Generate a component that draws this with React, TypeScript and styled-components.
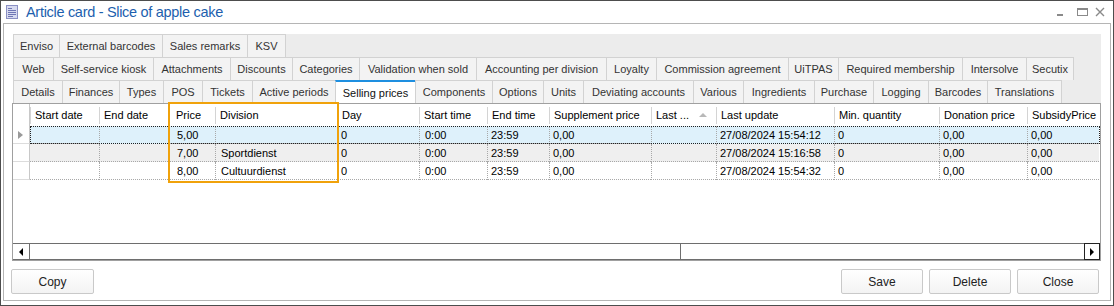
import React from "react";
import styled, { createGlobalStyle } from "styled-components";

const GlobalStyle = createGlobalStyle`
  html, body { margin: 0; padding: 0; background: #fff; }
  body { font-family: "Liberation Sans", Arial, sans-serif; }
  * { box-sizing: border-box; }
`;

const COLS = "17px 69px 69px 47px 122px 82px 68px 62px 102px 65px 118px 105px 88px 72px";

const Window = styled.div`
  position: relative;
  width: 1114px;
  height: 306px;
  border: 1px solid #4d4d4d;
  background: #fff;
  display: flex;
  flex-direction: column;
`;

const TitleBar = styled.div`
  height: 22px;
  display: flex;
  align-items: center;
  padding: 0 6px 0 5px;
`;

const Title = styled.span`
  margin-left: 8px;
  font-size: 14.5px;
  color: #1d5fae;
  letter-spacing: -0.3px;
`;

const Controls = styled.div`
  margin-left: auto;
  display: flex;
  align-items: center;
  height: 100%;
`;

const Control = styled.div<{ $w: number }>`
  width: ${({ $w }) => $w}px;
  display: flex;
  justify-content: center;
  align-items: center;
`;

const Frame = styled.div`
  flex: 1;
  margin: 0 2px 4px;
  border: 1px solid #b5b5b5;
  display: flex;
  flex-direction: column;
  padding: 10px 9px 6px 8px;
`;

const TabStrip = styled.div`
  margin-left: 1px;
  height: 69px;
  background: #ececec;
  display: flex;
  flex-direction: column;
`;

const TabRow = styled.div`
  display: flex;
  height: 23px;
`;

const Tab = styled.div<{ $w: number; $active?: boolean }>`
  width: ${({ $w }) => $w}px;
  height: 23px;
  border-top: ${({ $active }) => ($active ? "2px solid #1e8fe0" : "1px solid #d2d2d2")};
  border-left: 1px solid #d2d2d2;
  background: ${({ $active }) => ($active ? "#fff" : "#f3f3f3")};
  color: ${({ $active }) => ($active ? "#111" : "#333")};
  font-size: 11px;
  display: flex;
  align-items: center;
  justify-content: center;
  white-space: nowrap;
  &:last-child {
    border-right: 1px solid #d2d2d2;
  }
`;

const Grid = styled.div`
  position: relative;
  height: 158px;
  border: 1px solid #a0a0a0;
  display: flex;
  flex-direction: column;
  font-size: 11px;
  color: #000;
`;

const HeaderRow = styled.div`
  display: grid;
  grid-template-columns: ${COLS};
  height: 22px;
`;

const HeadCell = styled.div<{ $pad?: number }>`
  position: relative;
  display: flex;
  align-items: center;
  padding-left: ${({ $pad }) => $pad ?? 5}px;
  white-space: nowrap;
  overflow: hidden;
  &::before {
    content: "";
    position: absolute;
    left: 0;
    top: 3px;
    bottom: 2px;
    border-left: 1px solid #d4d4d4;
  }
`;

const HeadCorner = styled.div`
  border-right: 1px solid #c8c8c8;
`;

const SortArrow = styled.span`
  margin-left: auto;
  margin-right: 9px;
  width: 0;
  height: 0;
  border-left: 4px solid transparent;
  border-right: 4px solid transparent;
  border-bottom: 4px solid #b8b8b8;
`;

const BodyRow = styled.div<{ $bg: string; $focus?: boolean }>`
  position: relative;
  display: grid;
  grid-template-columns: ${COLS};
  height: 18px;
  & > div:not(:first-child) {
    background: ${({ $bg }) => $bg};
  }
  ${({ $focus }) =>
    $focus &&
    `
    &::after {
      content: "";
      position: absolute;
      left: 17px;
      right: 0;
      top: 0;
      bottom: 0;
      border: 1px dotted #222;
      pointer-events: none;
    }
  `}
`;

const Indicator = styled.div`
  border-right: 1px solid #c8c8c8;
  border-bottom: 1px solid #dcdcdc;
  display: flex;
  align-items: center;
  padding-left: 5px;
`;

const Pointer = styled.span`
  width: 0;
  height: 0;
  border-top: 4px solid transparent;
  border-bottom: 4px solid transparent;
  border-left: 5px solid #9a9a9a;
`;

const Cell = styled.div<{ $pad?: number }>`
  display: flex;
  align-items: center;
  padding-left: ${({ $pad }) => $pad ?? 5}px;
  border-left: 1px dotted #a8a8a8;
  border-bottom: 1px dotted #a8a8a8;
  white-space: nowrap;
  overflow: hidden;
  &:nth-child(2) {
    border-left: none;
  }
`;

const Filler = styled.div`
  flex: 1;
`;

const ScrollBar = styled.div`
  height: 17px;
  display: flex;
  border-top: 1px solid #6e6e6e;
  border-bottom: 1px solid #6e6e6e;
`;

const ScrollButton = styled.div<{ $side: "left" | "right" }>`
  width: 17px;
  display: flex;
  align-items: center;
  justify-content: center;
  ${({ $side }) =>
    $side === "left"
      ? "border-right: 1px solid #6e6e6e;"
      : "border: 1px solid #222; margin-top: -1px; margin-bottom: -1px; width: 16px;"}
`;

const Arrow = styled.span<{ $dir: "left" | "right" }>`
  width: 0;
  height: 0;
  border-top: 4px solid transparent;
  border-bottom: 4px solid transparent;
  ${({ $dir }) =>
    $dir === "left" ? "border-right: 4px solid #000;" : "border-left: 4px solid #000;"}
`;

const Thumb = styled.div`
  width: 651px;
  border-right: 1px solid #6e6e6e;
`;

const Track = styled.div`
  flex: 1;
`;

const Highlight = styled.div`
  position: absolute;
  left: 155px;
  top: -2px;
  width: 171px;
  height: 81px;
  border: 2px solid #f0a20b;
  pointer-events: none;
`;

const ButtonRow = styled.div`
  margin-top: 8px;
  height: 25px;
  display: flex;
  gap: 6px;
  padding-right: 2px;
`;

const Button = styled.button<{ $push?: boolean }>`
  width: 82px;
  height: 25px;
  border: 1px solid #c9c9c9;
  border-radius: 2px;
  background: linear-gradient(#ffffff, #f3f3f3);
  font-family: "Liberation Sans", Arial, sans-serif;
  font-size: 12px;
  color: #222;
  padding: 0;
  ${({ $push }) => $push && "margin-left: auto;"}
  &:first-child {
    margin-left: -1px;
    width: 83px;
  }
`;

const tabRows: [string, number][][] = [
  [
    ["Enviso", 46],
    ["External barcodes", 103],
    ["Sales remarks", 85],
    ["KSV", 39],
  ],
  [
    ["Web", 40],
    ["Self-service kiosk", 100],
    ["Attachments", 77],
    ["Discounts", 62],
    ["Categories", 67],
    ["Validation when sold", 117],
    ["Accounting per division", 130],
    ["Loyalty", 50],
    ["Commission agreement", 132],
    ["UiTPAS", 50],
    ["Required membership", 124],
    ["Intersolve", 64],
    ["Secutix", 48],
  ],
  [
    ["Details", 49],
    ["Finances", 57],
    ["Types", 44],
    ["POS", 39],
    ["Tickets", 50],
    ["Active periods", 83],
    ["Selling prices", 80],
    ["Components", 77],
    ["Options", 51],
    ["Units", 40],
    ["Deviating accounts", 110],
    ["Various", 50],
    ["Ingredients", 71],
    ["Purchase", 59],
    ["Logging", 55],
    ["Barcodes", 59],
    ["Translations", 75],
  ],
];

const headers = [
  "Start date",
  "End date",
  "Price",
  "Division",
  "Day",
  "Start time",
  "End time",
  "Supplement price",
  "Last ...",
  "Last update",
  "Min. quantity",
  "Donation price",
  "SubsidyPrice",
];

const rows = [
  { bg: "#def1fb", price: "5,00", division: "", updated: "27/08/2024 15:54:12" },
  { bg: "#efefef", price: "7,00", division: "Sportdienst", updated: "27/08/2024 15:16:58" },
  { bg: "#ffffff", price: "8,00", division: "Cultuurdienst", updated: "27/08/2024 15:54:32" },
];

function DocIcon() {
  return (
    <svg width="12" height="14" viewBox="0 0 12 14">
      <rect x="0.5" y="0.5" width="11" height="13" fill="#d7daf0" stroke="#8b90c4" />
      <rect x="2" y="3" width="4" height="1" fill="#6f76b5" />
      <rect x="2" y="5" width="8" height="1" fill="#6f76b5" />
      <rect x="2" y="7" width="8" height="1" fill="#6f76b5" />
      <rect x="2" y="9" width="8" height="1" fill="#6f76b5" />
      <rect x="2" y="11" width="5" height="1" fill="#6f76b5" />
    </svg>
  );
}

function App() {
  return (
    <>
      <GlobalStyle />
      <Window>
        <TitleBar>
          <DocIcon />
          <Title>Article card - Slice of apple cake</Title>
          <Controls>
            <Control $w={22}>
              <svg width="8" height="10" viewBox="0 0 8 10">
                <rect x="1" y="7" width="6" height="2" fill="#8a8a8a" />
              </svg>
            </Control>
            <Control $w={22}>
              <svg width="11" height="10" viewBox="0 0 11 10">
                <rect x="0.5" y="1.5" width="10" height="7" fill="none" stroke="#8a8a8a" />
                <rect x="0" y="1" width="11" height="2" fill="#8a8a8a" />
              </svg>
            </Control>
            <Control $w={14}>
              <svg width="10" height="10" viewBox="0 0 10 10">
                <path d="M1 1 L9 9 M9 1 L1 9" stroke="#8a8a8a" strokeWidth="1.4" />
              </svg>
            </Control>
          </Controls>
        </TitleBar>
        <Frame>
          <TabStrip>
            {tabRows.map((row, i) => (
              <TabRow key={i}>
                {row.map(([label, w]) => (
                  <Tab key={label} $w={w} $active={label === "Selling prices"}>
                    {label}
                  </Tab>
                ))}
              </TabRow>
            ))}
          </TabStrip>
          <Grid>
            <HeaderRow>
              <HeadCorner />
              {headers.map((h) => (
                <HeadCell key={h} $pad={h === "Price" ? 8 : 5}>
                  {h}
                  {h === "Last ..." && <SortArrow />}
                </HeadCell>
              ))}
            </HeaderRow>
            {rows.map((r, i) => (
              <BodyRow key={i} $bg={r.bg} $focus={i === 0}>
                <Indicator>{i === 0 && <Pointer />}</Indicator>
                <Cell />
                <Cell />
                <Cell $pad={8}>{r.price}</Cell>
                <Cell>{r.division}</Cell>
                <Cell $pad={3}>0</Cell>
                <Cell>0:00</Cell>
                <Cell $pad={3}>23:59</Cell>
                <Cell $pad={3}>0,00</Cell>
                <Cell />
                <Cell $pad={3}>{r.updated}</Cell>
                <Cell $pad={3}>0</Cell>
                <Cell $pad={3}>0,00</Cell>
                <Cell $pad={3}>0,00</Cell>
              </BodyRow>
            ))}
            <Filler />
            <ScrollBar>
              <ScrollButton $side="left">
                <Arrow $dir="left" />
              </ScrollButton>
              <Thumb />
              <Track />
              <ScrollButton $side="right">
                <Arrow $dir="right" />
              </ScrollButton>
            </ScrollBar>
            <Highlight />
          </Grid>
          <ButtonRow>
            <Button>Copy</Button>
            <Button $push>Save</Button>
            <Button>Delete</Button>
            <Button>Close</Button>
          </ButtonRow>
        </Frame>
      </Window>
    </>
  );
}

export default App;
